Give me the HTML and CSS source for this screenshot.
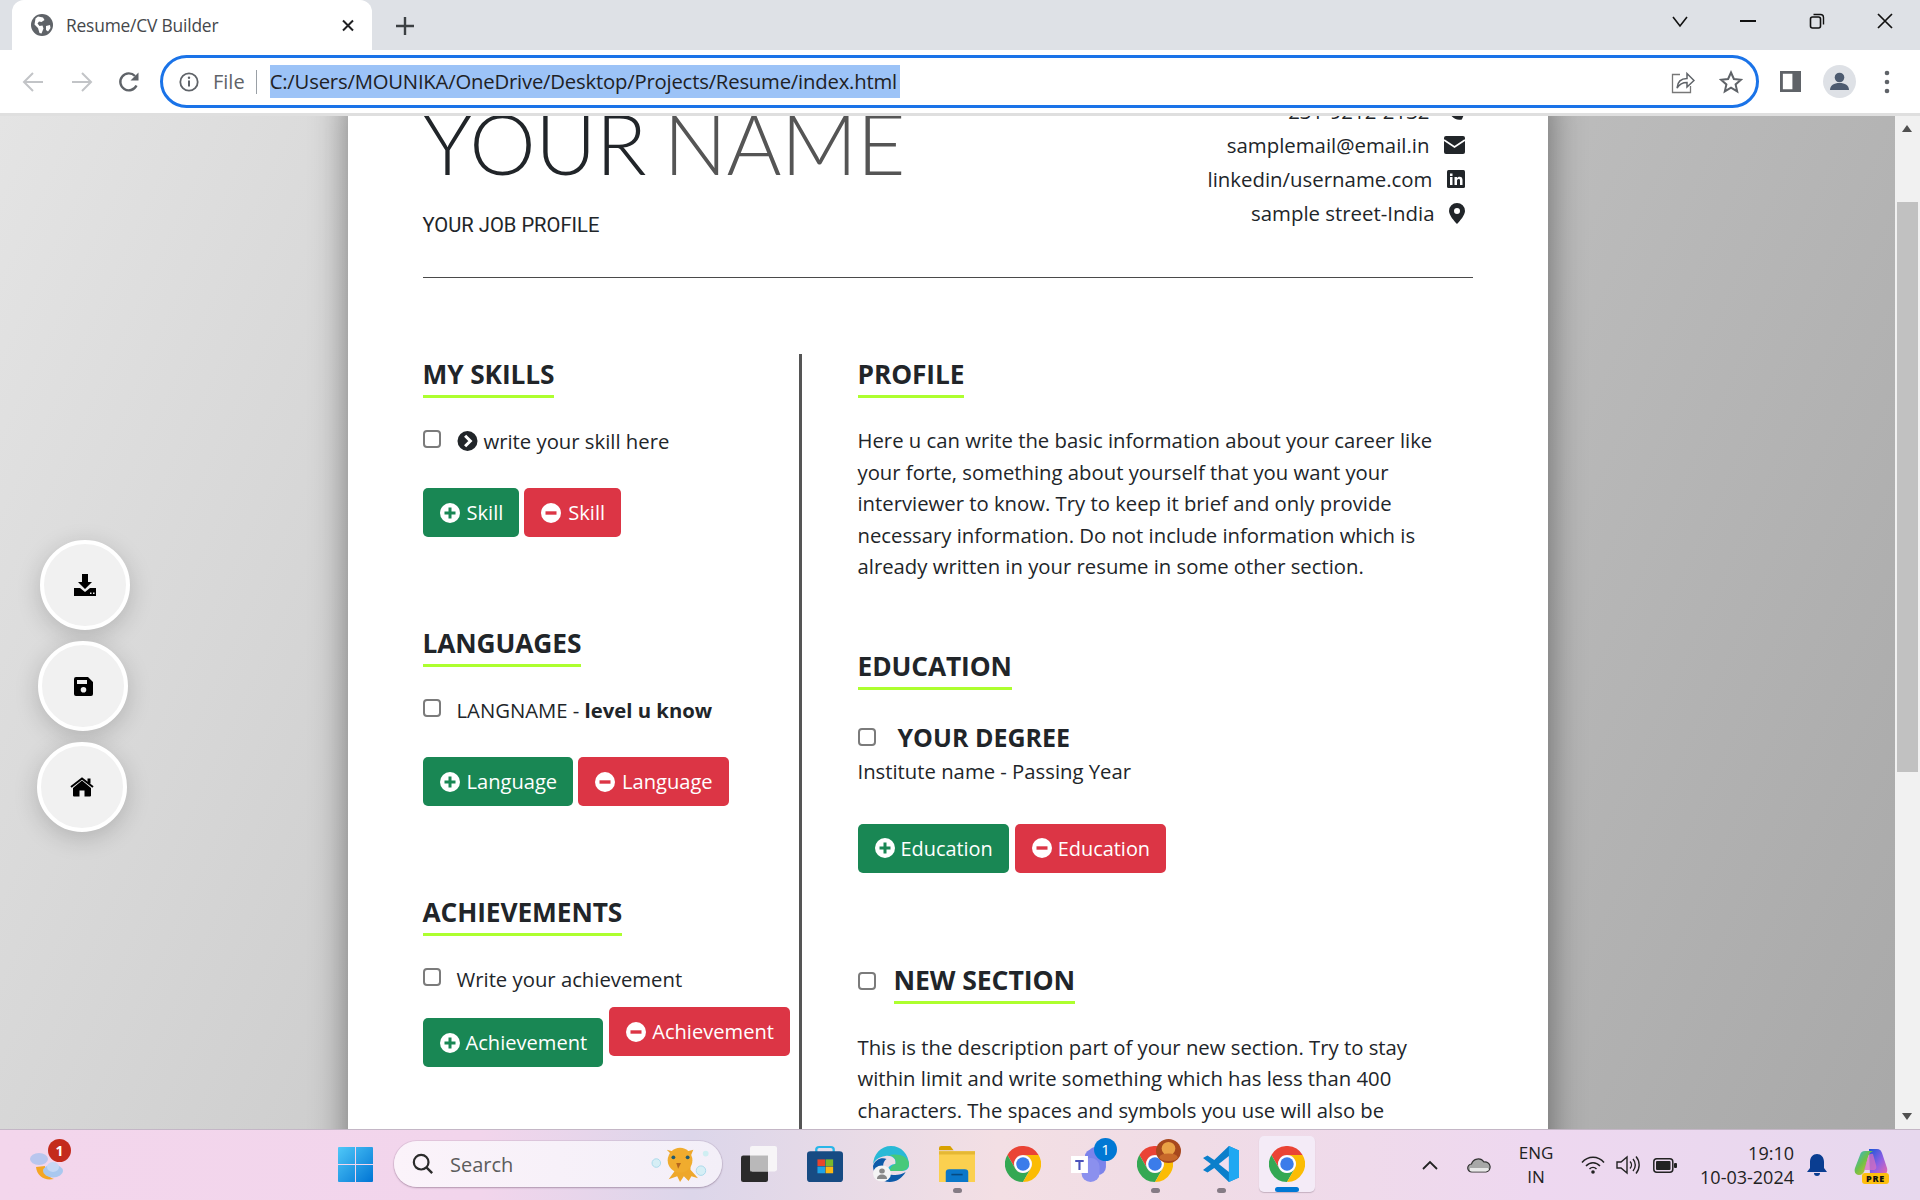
FILE: index.html
```html
<!DOCTYPE html>
<html lang="en">
<head>
<meta charset="utf-8">
<title>Resume/CV Builder</title>
<link rel="stylesheet" href="styles.css">
</head>
<body>
<svg class="defs" width="0" height="0">
  <symbol id="chrome" viewBox="0 0 48 48" preserveAspectRatio="none">
    <path fill="#ea4335" d="M3.2 12L13.6 30A12 12 0 0 1 24 12H44.8A24 24 0 0 0 3.2 12Z"/>
    <path fill="#34a853" d="M3.2 12A24 24 0 0 0 24 48L34.4 30A12 12 0 0 1 13.6 30Z"/>
    <path fill="#fbbc04" d="M44.8 12H24A12 12 0 0 1 34.4 30L24 48A24 24 0 0 0 44.8 12Z"/>
    <circle cx="24" cy="24" r="11.5" fill="#fff"/><circle cx="24" cy="24" r="9" fill="#3b7cea"/>
  </symbol>
  <symbol id="plus" viewBox="0 0 20 20"><circle cx="10" cy="10" r="10" fill="#fff"/><path d="M10 4.5v11M4.5 10h11" stroke="#198754" stroke-width="3"/></symbol>
  <symbol id="minus" viewBox="0 0 20 20"><circle cx="10" cy="10" r="10" fill="#fff"/><path d="M4.5 10h11" stroke="#dc3545" stroke-width="3.4"/></symbol>
</svg>

<div class="tabbar">
  <div class="tab">
    <svg class="ic-globe" viewBox="0 0 22 22"><circle cx="11" cy="11" r="11" fill="#5f6368"/><path fill="#fff" d="M7 2.500l5 1 1.500 2.500-3 2-2.500-.5-1.500 2 2 2.500 3-.5 1 3-2 5-2-.5-1.500-5-3.500-3.500 1-6zM15 12l4-1 .5 3-2.500 3.500-2-1.500z"/></svg>
    <span class="tab-title">Resume/CV Builder</span>
    <svg class="ic-x" viewBox="0 0 12 12"><path d="M1 1l10 10M11 1L1 11" stroke="#202124" stroke-width="2"/></svg>
  </div>
  <svg class="ic-newtab" viewBox="0 0 18 18"><path d="M9 0v18M0 9h18" stroke="#3c4043" stroke-width="2.400"/></svg>
  <div class="winctl">
    <svg viewBox="0 0 16 16"><path d="M1 4l7 9 7-9" fill="none" stroke="#111" stroke-width="1.600"/></svg>
    <svg viewBox="0 0 16 16"><path d="M0 8h16" stroke="#111" stroke-width="2"/></svg>
    <svg viewBox="0 0 16 16"><rect x="1.500" y="4" width="10" height="11" rx="2" fill="none" stroke="#111" stroke-width="1.600"/><path d="M4.500 1.500h7a3 3 0 0 1 3 3v7" fill="none" stroke="#111" stroke-width="1.400"/></svg>
    <svg viewBox="0 0 16 16"><path d="M1 1l14 14M15 1L1 15" stroke="#111" stroke-width="1.700"/></svg>
  </div>
</div>

<div class="toolbar">
  <svg class="nav nav-back" viewBox="0 0 22 22"><path d="M21 11H2M11 2l-9 9 9 9" fill="none" stroke="#c2c4c7" stroke-width="2"/></svg>
  <svg class="nav nav-fwd" viewBox="0 0 22 22"><path d="M1 11h19M11 2l9 9-9 9" fill="none" stroke="#c2c4c7" stroke-width="2"/></svg>
  <svg class="nav nav-reload" viewBox="0 0 22 22"><path d="M18.500 14.500A8.500 8.500 0 1 1 17 5" fill="none" stroke="#5f6368" stroke-width="2.400"/><path d="M20.500 1.500v8h-8z" fill="#5f6368"/></svg>
  <div class="omnibox">
    <svg class="ic-info" viewBox="0 0 20 20"><circle cx="10" cy="10" r="8.700" fill="none" stroke="#5f6368" stroke-width="1.800"/><path d="M10 8.500v6" stroke="#5f6368" stroke-width="2"/><circle cx="10" cy="5.800" r="1.200" fill="#5f6368"/></svg>
    <span class="file">File</span>
    <span class="sep"></span>
    <span class="url">C:/Users/MOUNIKA/OneDrive/Desktop/Projects/Resume/index.html</span>
    <svg class="ic-share" viewBox="0 0 24 24"><path d="M9 4.500H1.500v18h18V16" fill="none" stroke="#777" stroke-width="1.300"/><path d="M6 18c.5-6 4-9.500 10-9.500V3.500l7 7-7 6.500v-4.500c-4 0-7.500 1.500-10 5.500z" fill="none" stroke="#5f6368" stroke-width="1.500"/></svg>
    <svg class="ic-star" viewBox="0 0 24 24"><path d="M12 2.500l2.900 6.500 7.100.7-5.400 4.700 1.600 7-6.200-3.700-6.200 3.700 1.600-7L2 9.700l7.100-.7z" fill="none" stroke="#5f6368" stroke-width="2"/></svg>
  </div>
  <svg class="ic-panel" viewBox="0 0 22 22" preserveAspectRatio="none"><path fill-rule="evenodd" fill="#5f6368" d="M0 0h22v22H0zM3 3v16h10V3z"/></svg>
  <svg class="ic-avatar" viewBox="0 0 33 33"><circle cx="16.500" cy="16.500" r="16.500" fill="#dee1e6"/><circle cx="16.500" cy="12.500" r="4.800" fill="#4d5b70"/><path d="M7 25c0-4.500 4-7 9.500-7s9.500 2.500 9.500 7z" fill="#4d5b70"/></svg>
  <svg class="ic-kebab" viewBox="0 0 6 24"><circle cx="3" cy="3" r="2.300" fill="#5f6368"/><circle cx="3" cy="12" r="2.300" fill="#5f6368"/><circle cx="3" cy="21" r="2.300" fill="#5f6368"/></svg>
</div>

<div class="viewport">
  <div class="canvas">
    <main class="paper">
      <header class="head">
        <div class="identity">
          <h1 class="name">YOUR <span class="surname">NAME</span></h1>
          <p class="job">YOUR JOB PROFILE</p>
        </div>
        <ul class="contact">
          <li><span>231-9212-2132</span><svg class="c-phone" viewBox="0 0 20 20" preserveAspectRatio="none"><path fill="#212529" d="M4 3l4-2 3 5-2 2c1 2 2 3 4 4l2-2 4 3-2 4C9 19 2 11 4 3z"/></svg></li>
          <li><span>samplemail@email.in</span><svg class="c-mail" viewBox="0 0 21 18"><rect width="21" height="18" rx="2" fill="#212529"/><path d="M0 4l10.500 7L21 4" fill="none" stroke="#fff" stroke-width="1.800"/></svg></li>
          <li><span>linkedin/username.com</span><svg class="c-link" viewBox="0 0 18 18"><rect width="18" height="18" rx="1.500" fill="#212529"/><path fill="#fff" d="M3 7h2.500v8H3zM3 3.500h2.500V6H3zM7.500 7H10v1.200c.6-.9 1.500-1.400 2.700-1.400 1.900 0 2.800 1.200 2.800 3.300V15H13v-4.400c0-1-.4-1.600-1.300-1.600-1 0-1.700.7-1.700 1.800V15H7.500z"/></svg></li>
          <li><span>sample street-India</span><svg class="c-pin" viewBox="0 0 16 21"><path fill-rule="evenodd" fill="#212529" d="M8 0a8 8 0 0 1 8 8c0 4-5 10-8 13C5 18 0 12 0 8a8 8 0 0 1 8-8zm0 5a3 3 0 1 0 0 6 3 3 0 0 0 0-6z"/></svg></li>
        </ul>
      </header>

      <div class="columns">
        <div class="col-left">
          <section class="sec">
            <h2 class="title"><span>MY SKILLS</span></h2>
            <div class="item"><input class="check" type="checkbox"><svg class="chev" viewBox="0 0 21 21"><circle cx="10.500" cy="10.500" r="10.500" fill="#212529"/><path d="M8 5l5.500 5.500L8 16" fill="none" stroke="#fff" stroke-width="3.200"/></svg><span class="skill">write your skill here</span></div>
            <div class="btns"><button class="btn green"><svg><use href="#plus"/></svg>Skill</button><button class="btn red"><svg><use href="#minus"/></svg>Skill</button></div>
          </section>
          <section class="sec">
            <h2 class="title"><span>LANGUAGES</span></h2>
            <div class="item"><input class="check" type="checkbox"><span class="lang">LANGNAME - <b>level u know</b></span></div>
            <div class="btns"><button class="btn green"><svg><use href="#plus"/></svg>Language</button><button class="btn red"><svg><use href="#minus"/></svg>Language</button></div>
          </section>
          <section class="sec">
            <h2 class="title"><span>ACHIEVEMENTS</span></h2>
            <div class="item"><input class="check" type="checkbox"><span class="lang">Write your achievement</span></div>
            <div class="btns btns-ach"><button class="btn green low"><svg><use href="#plus"/></svg>Achievement</button><button class="btn red"><svg><use href="#minus"/></svg>Achievement</button></div>
          </section>
        </div>
        <div class="col-right">
          <section class="sec-r">
            <h2 class="title"><span>PROFILE</span></h2>
            <p class="para">Here u can write the basic information about your career like your forte, something about yourself that you want your interviewer to know. Try to keep it brief and only provide necessary information. Do not include information which is already written in your resume in some other section.</p>
          </section>
          <section class="sec-r">
            <h2 class="title"><span>EDUCATION</span></h2>
            <div class="degree"><input class="check" type="checkbox"><strong>YOUR DEGREE</strong></div>
            <div class="inst">Institute name - Passing Year</div>
            <div class="btns btns-edu"><button class="btn green"><svg><use href="#plus"/></svg>Education</button><button class="btn red"><svg><use href="#minus"/></svg>Education</button></div>
          </section>
          <section class="sec-r sec-new">
            <h2 class="title title-new"><input class="check" type="checkbox"><span>NEW SECTION</span></h2>
            <p class="para">This is the description part of your new section. Try to stay within limit and write something which has less than 400 characters. The spaces and symbols you use will also be counted.</p>
          </section>
        </div>
      </div>
    </main>
  </div>

  <div class="scrollbar">
    <span class="arrow up"></span>
    <span class="thumb"></span>
    <span class="arrow down"></span>
  </div>

  <div class="fabs">
    <button class="fab fab-1"><svg viewBox="0 0 22 22"><path d="M8 0h6v8h4l-7 7-7-7h4z" fill="#000"/><path fill-rule="evenodd" d="M0 14h6l5 4 5-4h6v8H0zM16 18.500v1.500h1.500v-1.500zM19 18.500v1.500h1.500v-1.500z" fill="#000"/></svg></button>
    <button class="fab fab-2"><svg viewBox="0 0 19 19"><path fill-rule="evenodd" d="M2 0h12l5 5v12a2 2 0 0 1-2 2H2a2 2 0 0 1-2-2V2a2 2 0 0 1 2-2zM3 3v4h10V3zM9.500 10a2.800 2.800 0 1 0 0 5.600 2.800 2.800 0 0 0 0-5.600z" fill="#000"/></svg></button>
    <button class="fab fab-3"><svg viewBox="0 0 24 19"><path d="M12 3L3 10.500V18a1 1 0 0 0 1 1h5.500v-6h5v6H20a1 1 0 0 0 1-1v-7.500z" fill="#000"/><path d="M1 9.500L12 1l11 8.500" fill="none" stroke="#000" stroke-width="2"/><path d="M17.500 1h3v5h-3z" fill="#000"/></svg></button>
  </div>
</div>

<footer class="taskbar">
  <div class="weather">
    <svg viewBox="0 0 40 50" width="40" height="50">
      <path d="M8 27c1 9 8 14 18 12-6-2-9-6-9-13z" fill="#f5a623"/>
      <ellipse cx="11" cy="19" rx="9" ry="6" fill="#b8c6ee"/><ellipse cx="25" cy="31" rx="10" ry="6.500" fill="#a9c8ef"/>
      <ellipse cx="25" cy="27" rx="6" ry="5" fill="#c6d8f5"/>
    </svg>
    <span class="wbadge">1</span>
  </div>

  <div class="tb-center">
    <svg class="tb-win" viewBox="0 0 35 35"><defs><linearGradient id="wg" x1="0" y1="0" x2="1" y2="1"><stop offset="0" stop-color="#4fc8f8"/><stop offset="1" stop-color="#0074d4"/></linearGradient></defs><path fill="url(#wg)" d="M0 1a1 1 0 0 1 1-1h16v17H0zM18 0h16a1 1 0 0 1 1 1v16H18zM0 18h17v17H1a1 1 0 0 1-1-1zM18 18h17v16a1 1 0 0 1-1 1H18z"/></svg>

    <div class="search">
      <svg class="s-glass" viewBox="0 0 24 24"><circle cx="10" cy="10" r="8" fill="none" stroke="#2b2b2b" stroke-width="2.400"/><path d="M16 16l6 6" stroke="#2b2b2b" stroke-width="2.600"/></svg>
      <span class="s-label">Search</span>
      <svg class="s-mascot" viewBox="0 0 62 40">
        <circle cx="5" cy="19" r="4.500" fill="#d6eef5" stroke="#a9d9ea"/><circle cx="57" cy="9" r="3" fill="#cfeef2"/><circle cx="52" cy="27" r="5" fill="#d6eef5" stroke="#a9d9ea"/>
        <path d="M16 5l8 2 12 0 8-2-3 7 0 14 8 9-7-2-3 5-5-5-4 6-3-6-9 3 6-8-1-16z" fill="#eea72a"/>
        <ellipse cx="30" cy="16" rx="13" ry="13" fill="#f0ac2e"/><circle cx="23" cy="13" r="2" fill="#205a6e"/><circle cx="38" cy="13" r="2" fill="#205a6e"/><path d="M26 19h5l-3 6z" fill="#b5651d"/>
      </svg>
    </div>

    <div class="slots">
      <div class="slot"><svg class="tb" viewBox="0 0 32 34" preserveAspectRatio="none"><rect x="0" y="9" width="24" height="25" rx="2" fill="#2a2a2a"/><rect x="8" y="0" width="24" height="24" rx="2" fill="#f7f5f7"/><rect x="8" y="9" width="16" height="15" fill="#a9a9a9" opacity=".8"/></svg></div>

      <div class="slot"><svg class="tb" viewBox="0 0 31 35" preserveAspectRatio="none"><path d="M8 8V3.500C8 2 9 1 10.500 1h10C22 1 23 2 23 3.500V8" fill="none" stroke="#29b6e8" stroke-width="2"/><rect y="5" width="31" height="30" rx="3" fill="#174b83"/><rect x="9" y="13" width="6.500" height="6.500" fill="#e8452c"/><rect x="16" y="13" width="6.500" height="6.500" fill="#7ab82c"/><rect x="9" y="20" width="6.500" height="6.500" fill="#1fa2e6"/><rect x="16" y="20" width="6.500" height="6.500" fill="#fcb913"/></svg></div>

      <div class="slot"><svg class="tb" viewBox="0 0 32 36" preserveAspectRatio="none"><path d="M0 20C0 8 7 0 16 0s16 8 16 19c0 5-4 6-8 6H13c0-4 3-7 7-7 1-6-4-9-9-8-6 1-11 5-11 10z" fill="#29b9d6"/><path d="M32 17c0 6-4 8-8 8H15c0-3 2-6 5-7 1-4-1-8-6-9 9-2 17 1 18 8z" fill="#47c97a"/><path d="M0 20c2-7 8-9 12-7-5 4-4 15 6 16 4 .5 8-1 11-3-3 6-8 10-14 10C7 36 0 29 0 20z" fill="#0c5aa9"/><circle cx="8" cy="27.500" r="8" fill="#f4f4f4"/><circle cx="8" cy="25" r="2.500" fill="#888"/><path d="M3.500 33c0-3 2-4.500 4.500-4.500s4.500 1.500 4.500 4.500z" fill="#888"/></svg></div>

      <div class="slot running"><svg class="tb" viewBox="0 0 32 34" preserveAspectRatio="none"><path d="M0 2a2 2 0 0 1 2-2h8l3 4h-13z" fill="#d9a100"/><path d="M0 5h32v29H0z" fill="#fbd04f"/><path d="M0 5h32v3H0z" fill="#e5b834"/><path d="M6 25a3 3 0 0 1 3-3h14a3 3 0 0 1 3 3v9H6z" fill="#0a77c9"/><path d="M11 27h10" stroke="#064a80" stroke-width="1.500"/></svg></div>

      <div class="slot"><svg class="tb"><use href="#chrome"/></svg></div>

      <div class="slot">
        <div class="tb-box">
          <svg class="tb" viewBox="0 0 34 36" preserveAspectRatio="none"><rect x="13" y="3" width="20" height="26" rx="8" fill="#7b83eb"/><circle cx="23" cy="7" r="6" fill="#7b83eb"/><rect x="10" y="12" width="17" height="24" rx="8.500" fill="#8b90ee"/><rect y="10" width="16" height="17" fill="#fff"/><path d="M4 14h8v2H9v8H7v-8H4z" fill="#4b53bc"/></svg>
          <span class="tbadge">1</span>
        </div>
      </div>

      <div class="slot running">
        <div class="tb-box">
          <svg class="tb"><use href="#chrome"/></svg>
          <svg class="avatar-over" viewBox="0 0 22 25" preserveAspectRatio="none"><ellipse cx="11" cy="12.500" rx="11" ry="12.500" fill="#a7481d"/><ellipse cx="11" cy="10" rx="6" ry="7" fill="#e9a145"/><ellipse cx="11" cy="19" rx="8" ry="4" fill="#c7682a"/></svg>
        </div>
      </div>

      <div class="slot running"><svg class="tb" viewBox="0 0 32 36" preserveAspectRatio="none"><path d="M23 0l9 4.500v27L23 36 10 22l-6 4.500L0 24l7-6-7-6 4-2.500L10 14z" fill="#0b7fcb"/><path d="M23 0l9 4.500v27L23 36z" fill="#1fa8f2"/><path d="M23 10l-9 8 9 8z" fill="#f0dff0"/></svg></div>

      <div class="slot active-slot">
        <div class="active-app">
          <svg class="tb"><use href="#chrome"/></svg>
          <span class="active-bar"></span>
        </div>
      </div>
    </div>
  </div>

  <div class="tray">
    <svg class="t-chev" viewBox="0 0 16 10"><path d="M1 9l7-7 7 7" fill="none" stroke="#222" stroke-width="1.800"/></svg>
    <svg class="t-cloud" viewBox="0 0 24 16"><path d="M5 15a4 4 0 0 1-.5-8A7 7 0 0 1 17 5a5 5 0 0 1 2 10z" fill="#a8a8a8" stroke="#333" stroke-width="1.200"/><path d="M3 11h18l1 2-3 1.500H5L3 14z" fill="#e9e9e9"/></svg>
    <div class="t-lang"><span>ENG</span><span>IN</span></div>
    <svg class="t-wifi" viewBox="0 0 24 18"><path d="M1 6.500C7-.5 17-.5 23 6.500M5 10c4-4.500 10-4.500 14 0M8.500 13c2-2 5-2 7 0" fill="none" stroke="#222" stroke-width="1.500"/><circle cx="12" cy="16" r="1.800" fill="#222"/></svg>
    <svg class="t-vol" viewBox="0 0 24 20"><path d="M1 7h4l6-5v16l-6-5H1z" fill="none" stroke="#222" stroke-width="1.400"/><path d="M14 6.500a5 5 0 0 1 0 7M17 4a9 9 0 0 1 0 12M20 1.500a13 13 0 0 1 0 17" fill="none" stroke="#222" stroke-width="1.400"/></svg>
    <svg class="t-bat" viewBox="0 0 24 15"><rect x=".8" y=".8" width="19" height="13.400" rx="3" fill="none" stroke="#222" stroke-width="1.500"/><rect x="3" y="3" width="14.500" height="9" rx="1" fill="#222"/><rect x="21" y="5" width="3" height="5" rx="1" fill="#222"/></svg>
    <div class="t-clock"><span>19:10</span><span>10-03-2024</span></div>
    <svg class="t-bell" viewBox="0 0 20 23"><path d="M10 0c4 0 7 3 7 8v6l3 4H0l3-4V8c0-5 3-8 7-8z" fill="#0a3d91"/><path d="M7 19h6a3 3 0 0 1-6 0z" fill="#0a3d91"/></svg>
    <div class="t-copilot">
      <svg viewBox="0 0 34 30"><defs><linearGradient id="cp" x1="0" y1="0" x2="1" y2="1"><stop offset="0" stop-color="#2fb4e8"/><stop offset=".45" stop-color="#6cc04a"/><stop offset="1" stop-color="#f2c21f"/></linearGradient><linearGradient id="cp2" x1="0" y1="0" x2="1" y2="1"><stop offset="0" stop-color="#1557d8"/><stop offset=".55" stop-color="#8f5fe4"/><stop offset="1" stop-color="#ee6aa8"/></linearGradient></defs><path d="M15 1h8c3 0 4 2 5 4l5 15c1 4-1 7-5 7H16z" fill="url(#cp2)"/><path d="M11 3h8c-3 1-4 3-5 6l-3 12c-1 4-3 6-6 6-4 0-5-4-4-7L6 7c1-3 2-4 5-4z" fill="url(#cp)"/><path d="M14 9c1-3 3-4 5-3l3 11c1 3 0 5-3 5H10z" fill="#d86fc0" opacity=".75"/></svg>
      <span class="pre">PRE</span>
    </div>
  </div>
</footer>
</body>
</html>
```

FILE: styles.css
```css
* { box-sizing: border-box; }
html, body { margin: 0; height: 1200px; overflow: hidden; }
body { width: 1920px; display: flex; flex-direction: column; font-family: "Open Sans", "Noto Sans", sans-serif; color: #212529; background: #fff; }
.defs { position: absolute; }
h1, h2, p, ul { margin: 0; padding: 0; }
svg { display: block; flex: none; }

/* browser chrome */
.tabbar { height: 50px; flex: none; background: #dee1e6; display: flex; align-items: flex-start; position: relative; }
.tab { margin-left: 12px; width: 360px; height: 50px; background: #fff; border-radius: 12px 12px 0 0; display: flex; align-items: center; padding: 0 0 0 19px; }
.ic-globe { width: 22px; height: 24px; }
.tab-title { margin-left: 13px; font-size: 17.400px; color: #45474b; width: 255px; letter-spacing: -.2px; white-space: nowrap; }
.ic-x { width: 12px; height: 13px; margin-left: 21px; }
.ic-newtab { width: 18px; height: 18px; margin: 17px 0 0 24px; }
.winctl { margin-left: auto; display: flex; align-items: center; gap: 52.500px; padding: 13px 27px 0 0; }
.winctl svg { width: 16px; height: 16px; }

.toolbar { height: 66px; flex: none; background: #fff; border-bottom: 3px solid #dfdfdf; display: flex; align-items: center; padding-left: 22px; }
.nav { width: 22px; height: 22px; }
.nav-fwd { margin-left: 27px; }
.nav-reload { margin-left: 25px; }
.omnibox { margin-left: 20px; width: 1599px; height: 53px; border: 3px solid #1a73e8; border-radius: 27px; display: flex; align-items: center; padding: 0 13px 0 16px; }
.ic-info { width: 20px; height: 22px; }
.file { margin-left: 14px; font-size: 20px; color: #5f6368; }
.sep { width: 1px; height: 24px; background: #9aa0a6; margin-left: 11px; }
.url { margin-left: 13px; height: 33px; line-height: 33px; background: #9cc3f7; color: #202124; font-size: 20.300px; width: 630px; white-space: nowrap; overflow: hidden; letter-spacing: -.2px; }
.ic-share { width: 24px; height: 24px; margin-left: auto; }
.ic-star { width: 24px; height: 24px; margin-left: 24px; }
.ic-panel { width: 21px; height: 21px; margin-left: 21px; }
.ic-avatar { width: 33px; height: 33px; margin-left: 22px; }
.ic-kebab { width: 6px; height: 24px; margin-left: 28px; }

/* page viewport */
.viewport { flex: 1; min-height: 0; display: flex; position: relative; overflow: hidden; background: linear-gradient(115deg, #e4e4e4 0%, #cdcdcd 35%, #a8a8a8 100%); }
.canvas { flex: 1; min-width: 0; overflow: hidden; }
.paper { width: 1200px; height: 1100px; margin: -22px auto 0; background: #fff; padding: 0 75px; box-shadow: 0 0 34px rgba(0,0,0,.45); }

.head { height: 184px; border-bottom: 1px solid #4a4a4a; display: flex; justify-content: space-between; }
.identity { display: flex; flex-direction: column; }
.name { font-family: "Lato", sans-serif; font-weight: 300; font-size: 84px; line-height: 84px; margin-top: 7px; letter-spacing: -.5px; word-spacing: -5px; white-space: nowrap; color: #212529; }
.surname { color: #555; }
.job { font-family: "Roboto", sans-serif; font-size: 20.200px; line-height: 28px; margin-top: 26px; color: #212529; }
.contact { list-style: none; padding-right: 8px; font-size: 20.400px; }
.contact li { height: 34px; display: flex; justify-content: flex-end; align-items: center; }
.contact span { white-space: nowrap; margin-right: 14px; }
.c-phone { width: 21px; height: 24px; }
.c-mail { width: 21px; height: 18px; }
.c-link { width: 18px; height: 18px; }
.c-pin { width: 16px; height: 21px; }

.columns { display: flex; margin-top: 76px; }
.col-left { width: 379px; border-right: 3px solid #555; padding-top: 3px; flex: none; min-height: 800px; }
.col-right { margin-left: 56px; width: 616px; padding-top: 3px; }

.title { font-size: 26.300px; font-weight: 700; line-height: 35px; color: #212529; display: flex; letter-spacing: -.1px; }
.title span { display: block; border-bottom: 3px solid #adff2f; padding-bottom: 3px; white-space: nowrap; }
.sec { margin-bottom: 89px; }
.item { margin-top: 27px; height: 32px; display: flex; align-items: center; font-size: 20.300px; white-space: nowrap; }
.check { appearance: none; width: 18px; height: 18px; margin: 0; border: 2px solid #7b7b7b; border-radius: 4px; background: #fff; flex: none; }
.item .check { margin-top: -5px; }
.chev { width: 21px; height: 20px; margin-left: 16px; }
.skill { margin-left: 6px; }
.lang { margin-left: 16px; }
.lang b { font-weight: 700; }
.btns { margin-top: 31px; display: flex; gap: 5px; align-items: flex-start; }
.btn { height: 49px; border: 0; border-radius: 5px; color: #fff; font-family: inherit; font-size: 20.100px; padding: 0 16px; display: flex; align-items: center; gap: 6px; white-space: nowrap; }
.btn svg { width: 22px; height: 20px; }
.green { background: #198754; }
.red { background: #dc3545; }
.btns-ach { margin-top: 12px; gap: 6px; }
.btns-ach .btn { gap: 5px; }
.low { margin-top: 11px; }

.para { font-size: 20.300px; line-height: 31.500px; margin-top: 27px; color: #212529; }
.sec-r { margin-bottom: 66px; }
.degree { margin-top: 31px; height: 32px; display: flex; align-items: center; white-space: nowrap; }
.degree strong { margin-left: 22px; font-size: 25px; font-weight: 700; }
.inst { margin-top: 2px; height: 32px; line-height: 32px; font-size: 20.300px; }
.btns-edu { margin-top: 37px; gap: 6px; }
.btns-edu .btn { font-size: 19.900px; gap: 5px; }
.sec-new { margin-top: 90px; }
.title-new { align-items: flex-start; font-size: 26.600px; }
.title-new .check { margin: 9px 18px 0 0; }
.sec-new .para { margin-top: 28px; max-width: 600px; }

.scrollbar { width: 25px; flex: none; background: #f1f1f1; position: relative; }
.thumb { position: absolute; left: 2px; right: 2px; top: 86px; height: 570px; background: #c1c1c1; }
.arrow { position: absolute; left: 7px; width: 0; height: 0; border-left: 5.500px solid transparent; border-right: 5.500px solid transparent; }
.arrow.up { top: 9px; border-bottom: 7px solid #505050; }
.arrow.down { bottom: 9px; border-top: 7px solid #505050; }

.fabs { position: absolute; left: 0; top: 424px; display: flex; flex-direction: column; gap: 11px; align-items: flex-start; }
.fab { width: 90px; height: 90px; border-radius: 50%; background: #f1f1f1; border: 4px solid #fff; box-shadow: 0 6px 24px rgba(0,0,0,.18); display: flex; align-items: center; justify-content: center; padding: 0; }
.fab-1 { margin-left: 40px; }
.fab-2 { margin-left: 38px; }
.fab-3 { margin-left: 37px; }
.fab-1 svg { width: 22px; height: 22px; }
.fab-2 svg { width: 19px; height: 19px; }
.fab-3 svg { width: 24px; height: 20px; }

/* taskbar */
.taskbar { height: 71px; flex: none; border-top: 1px solid #c4b6c6; display: flex; align-items: center; position: relative; background: linear-gradient(90deg, #f3d6ec 0%, #f2d5ec 25%, #dcd6ea 36%, #f3dfe4 52%, #f0dce6 62%, #eed8f0 80%, #e7d8ee 100%); }
.weather { width: 60px; height: 50px; margin-left: 28px; position: relative; }
.wbadge { position: absolute; left: 20px; top: -1px; width: 23px; height: 23px; border-radius: 50%; background: #c42b1c; color: #fff; font-size: 14px; font-weight: 700; line-height: 23px; text-align: center; }
.tb-center { position: absolute; left: 338px; top: 0; display: flex; align-items: center; height: 68px; }
.tb-win { width: 35px; height: 35px; }
.search { margin-left: 21px; width: 328px; height: 46px; border-radius: 23px; background: linear-gradient(90deg,#fbf3fa,#f3eff8); box-shadow: 0 1px 2px rgba(90,60,90,.35), 0 0 0 1px rgba(150,120,150,.15); display: flex; align-items: center; padding-left: 18px; }
.s-glass { width: 22px; height: 24px; }
.s-label { margin-left: 16px; font-size: 20px; color: #5c5c5c; }
.s-mascot { margin-left: auto; margin-right: 10px; width: 62px; height: 38px; }
.slots { margin-left: 4px; display: flex; align-items: center; height: 68px; }
.slot { width: 66px; height: 56px; display: flex; align-items: center; justify-content: center; position: relative; }
.tb { width: 36px; height: 36px; }
.tb-box { position: relative; width: 36px; height: 36px; }
.running::after { content: ""; position: absolute; left: 50%; margin-left: -4px; top: 52px; width: 9px; height: 5px; border-radius: 3px; background: #857b85; }
.tbadge { position: absolute; left: 23px; top: -8px; width: 23px; height: 23px; border-radius: 50%; background: #0078d4; color: #fff; font-size: 15px; line-height: 23px; text-align: center; }
.avatar-over { position: absolute; left: 19px; top: -7px; width: 25px; height: 24px; }
.active-app { width: 56px; height: 56px; border-radius: 5px; background: #f4ebf7; box-shadow: 0 1px 1px rgba(100,80,100,.3); display: flex; align-items: center; justify-content: center; position: relative; }
.active-bar { position: absolute; bottom: 0; left: 16px; width: 24px; height: 5px; border-radius: 3px; background: #0078d4; }

.tray { margin-left: auto; display: flex; align-items: center; height: 70px; font-size: 17px; color: #222; padding-right: 30px; }
.t-chev { width: 16px; height: 10px; }
.t-cloud { width: 24px; height: 16px; margin-left: 29px; }
.t-lang { margin-left: 27px; display: flex; flex-direction: column; align-items: center; line-height: 24px; width: 36px; }
.t-wifi { width: 24px; height: 18px; margin-left: 27px; }
.t-vol { width: 24px; height: 20px; margin-left: 11px; }
.t-bat { width: 24px; height: 15px; margin-left: 13px; }
.t-clock { width: 104px; margin-left: 13px; display: flex; flex-direction: column; align-items: flex-end; line-height: 24px; white-space: nowrap; font-size: 18px; }
.t-bell { width: 20px; height: 23px; margin-left: 13px; }
.t-copilot { width: 36px; height: 34px; margin-left: 27px; position: relative; }
.t-copilot svg { width: 34px; height: 30px; }
.pre { position: absolute; left: 8px; bottom: -2px; width: 27px; height: 11px; background: #fdbf0f; border-radius: 3px; font-size: 9px; line-height: 11px; font-weight: 800; letter-spacing: .8px; text-align: center; color: #111; }
```
